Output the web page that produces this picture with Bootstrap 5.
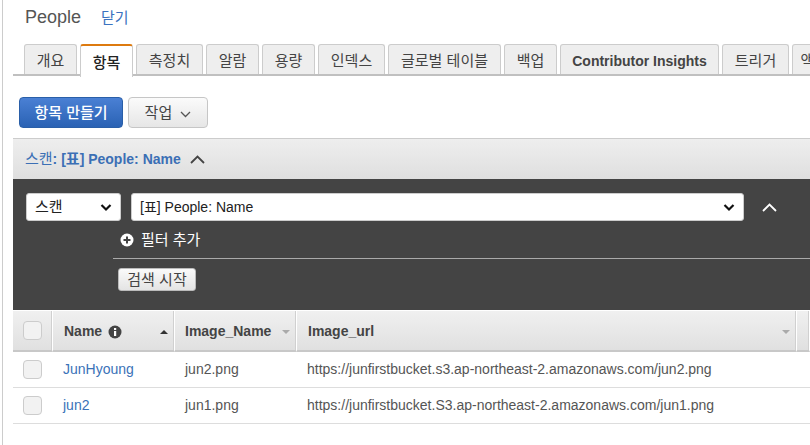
<!DOCTYPE html>
<html lang="ko">
<head>
<meta charset="utf-8">
<title>People</title>
<link rel="stylesheet" href="https://cdn.jsdelivr.net/npm/bootstrap@5.3.0/dist/css/bootstrap.min.css">
<style>
html,body{height:445px;overflow:hidden;background:#fff}
body{font-family:"Liberation Sans","Noto Sans CJK KR",sans-serif;font-size:14px;color:#444}
.shell{margin-left:2px;border-left:1px solid #ccc;padding-left:10px;height:445px;overflow:hidden}
.headline{height:44px;padding:4px 0 0 12px;gap:20px;align-items:baseline}
.headline .ttl{font-size:18px;color:#555}
.headline a{color:#3a72c0;text-decoration:none;font-size:15px}
.tabrow{height:32px;border-bottom:2px solid #c0c0c0;padding-left:11px;gap:3px;flex-wrap:nowrap;overflow:visible}
.tabrow .nav-link{flex:none;height:30px;padding:0;line-height:32px;font-size:15px;color:#444;background:#eee;border:1px solid #ccc;border-bottom:0;border-radius:3px 3px 0 0;text-align:center;white-space:nowrap}
.tabrow .nav-link.on{height:33px;background:#fff;color:#222;font-weight:500;border-top:2px solid #dd7a0f;line-height:34px;position:relative;z-index:1}
.tabrow .nav-link.wide{font-weight:700;font-size:14px;line-height:32px;color:#444}
.actions{padding:21px 0 0 6px;gap:5px;height:62px}
.btn-make,.btn-act{height:31px;font-size:15px;padding:0;border-radius:4px;line-height:27px}
.btn-make{width:104px;color:#fff;font-weight:500;border:1px solid #2a5fa8;background:linear-gradient(#4a80d4,#2a62b4)}
.btn-act{width:80px;color:#444;border:1px solid #c6c6c6;background:linear-gradient(#fbfbfb,#e6e6e6)}
.panelhead{height:41px;border-top:1px solid #ccc;padding-left:12px;background:linear-gradient(#eee,#dfdfdf);gap:9px;font-weight:700;color:#3b6fb5;font-size:14px}
.ko-soft{font-weight:400;font-size:15px}
.ko-hard{font-size:15px}
.darkbox{height:131px;background:#444;color:#fff;position:relative;padding:14px 0 0 13px}
.darkbox .form-select{height:28px;padding:0 20px 0 8px;font-size:14px;line-height:26px;color:#222;border:1px solid #ccc;border-radius:3px;background-size:12px 9px;background-position:right 8px center;background-image:url("data:image/svg+xml,%3Csvg xmlns='http://www.w3.org/2000/svg' viewBox='0 0 12 9'%3E%3Cpath d='M1.5 2l4.5 4.5L10.500 2' fill='none' stroke='%23111' stroke-width='2.200'/%3E%3C/svg%3E")}
.darkbox .form-select.sel-a{width:95px;flex:none;font-size:15px}
.sel-b{width:613px;flex:none}
.selrow{gap:10px;align-items:center}
.selrow svg{margin-left:8px}
.addrow{margin:5px 0 0 94px;height:28px;gap:7px;font-size:15px;line-height:20px;align-items:center}
.filterfoot{margin:4px 0 0 87px;border-top:1px solid #aaa;padding:9px 0 0 5px}
.btn-go{width:78px;height:23px;padding:0;font-size:15px;line-height:19px;color:#444;border:1px solid #bbb;border-radius:3px;background:linear-gradient(#fafafa,#e4e4e4)}
.grid-wrap{margin:1px 0 0;overflow:hidden}
.datagrid{table-layout:fixed;width:797px;margin:0;border-collapse:separate;border-spacing:0;font-size:14px;color:#555;--bs-table-color:#555}
.datagrid th{height:41px;padding:2px 0 0 11px;background:linear-gradient(#f0f0f0,#e0e0e0);border-bottom:2px solid #c8c8c8;border-right:1px solid #fff;color:#444;font-weight:700;vertical-align:middle;box-shadow:inset -1px 0 0 #d0d0d0}
.datagrid th:nth-child(3){padding-left:10px}
.datagrid td{height:36px;padding:0 0 0 10px;border-bottom:1px solid #ddd;vertical-align:middle;white-space:nowrap;overflow:hidden}
.datagrid td:first-child,.datagrid th:first-child{padding:0 0 0 10px}
.datagrid a{color:#3a72b8;text-decoration:none}
.tick{display:block;width:19px;height:19px;border:1px solid #ccc;border-radius:4px;background:#f2f2f2}
.th-in{display:flex;align-items:center;justify-content:space-between;padding-right:6px}
.th-in span.nm{display:flex;align-items:center;gap:6px}
.arr{width:0;height:0;border-left:4px solid transparent;border-right:4px solid transparent}
.arr.up{border-bottom:4px solid #333}
.arr.dn{border-top:4px solid #aaa}
</style>
</head>
<body>
<div class="shell">
  <div class="headline d-flex">
    <span class="ttl">People</span>
    <a href="#">닫기</a>
  </div>
  <ul class="nav tabrow d-flex">
    <li class="nav-item"><a class="nav-link" style="width:53px" href="#">개요</a></li>
    <li class="nav-item"><a class="nav-link on" style="width:53px" href="#">항목</a></li>
    <li class="nav-item"><a class="nav-link" style="width:67px" href="#">측정치</a></li>
    <li class="nav-item"><a class="nav-link" style="width:53px" href="#">알람</a></li>
    <li class="nav-item"><a class="nav-link" style="width:53px" href="#">용량</a></li>
    <li class="nav-item"><a class="nav-link" style="width:67px" href="#">인덱스</a></li>
    <li class="nav-item"><a class="nav-link" style="width:113px" href="#">글로벌 테이블</a></li>
    <li class="nav-item"><a class="nav-link" style="width:53px" href="#">백업</a></li>
    <li class="nav-item"><a class="nav-link wide" style="width:159px" href="#">Contributor Insights</a></li>
    <li class="nav-item"><a class="nav-link" style="width:67px" href="#">트리거</a></li>
    <li class="nav-item"><a class="nav-link" style="width:90px" href="#">액세스 제어</a></li>
  </ul>
  <div class="actions d-flex align-items-start">
    <button class="btn btn-make" type="button">항목 만들기</button>
    <button class="btn btn-act" type="button">작업
      <svg width="11" height="7" viewBox="0 0 11 7" class="ms-1"><path d="M1 1l4.500 4.500L10 1" fill="none" stroke="#555" stroke-width="1.300"/></svg>
    </button>
  </div>
  <div class="panelhead d-flex align-items-center">
    <span><span class="ko-soft">스캔</span>: [<span class="ko-hard">표</span>] People: Name</span>
    <svg width="15" height="9" viewBox="0 0 15 9"><path d="M1 8l6.500-6.500L14 8" fill="none" stroke="#444" stroke-width="1.800"/></svg>
  </div>
  <div class="darkbox">
    <div class="selrow d-flex">
      <select class="form-select sel-a"><option>스캔</option></select>
      <select class="form-select sel-b"><option>[표] People: Name</option></select>
      <svg width="15" height="9" viewBox="0 0 15 9"><path d="M1 8l6.500-6.500L14 8" fill="none" stroke="#fff" stroke-width="1.800"/></svg>
    </div>
    <div class="addrow d-flex">
      <svg width="14" height="14" viewBox="0 0 14 14"><circle cx="7" cy="7" r="6.500" fill="#fff"/><path d="M7 3.500v7M3.500 7h7" stroke="#444" stroke-width="2"/></svg>
      <span>필터 추가</span>
    </div>
    <div class="filterfoot">
      <button class="btn btn-go" type="button">검색 시작</button>
    </div>
  </div>
  <div class="grid-wrap">
    <table class="table datagrid">
      <colgroup><col style="width:40px"><col style="width:122px"><col style="width:122px"><col style="width:500px"><col></colgroup>
      <thead>
        <tr>
          <th><span class="tick"></span></th>
          <th><div class="th-in"><span class="nm">Name
            <svg width="14" height="14" viewBox="0 0 14 14"><circle cx="7" cy="7" r="6.500" fill="#444"/><rect x="6" y="6" width="2.200" height="5" fill="#fff"/><rect x="6" y="3" width="2.200" height="2" fill="#fff"/></svg></span><i class="arr up"></i></div></th>
          <th><div class="th-in"><span>Image_Name</span><i class="arr dn"></i></div></th>
          <th><div class="th-in"><span>Image_url</span><i class="arr dn"></i></div></th>
          <th></th>
        </tr>
      </thead>
      <tbody>
        <tr><td><span class="tick"></span></td><td><a href="#">JunHyoung</a></td><td>jun2.png</td><td colspan="2">https://junfirstbucket.s3.ap-northeast-2.amazonaws.com/jun2.png</td></tr>
        <tr><td><span class="tick"></span></td><td><a href="#">jun2</a></td><td>jun1.png</td><td colspan="2">https://junfirstbucket.S3.ap-northeast-2.amazonaws.com/jun1.png</td></tr>
      </tbody>
    </table>
  </div>
</div>
</body>
</html>
